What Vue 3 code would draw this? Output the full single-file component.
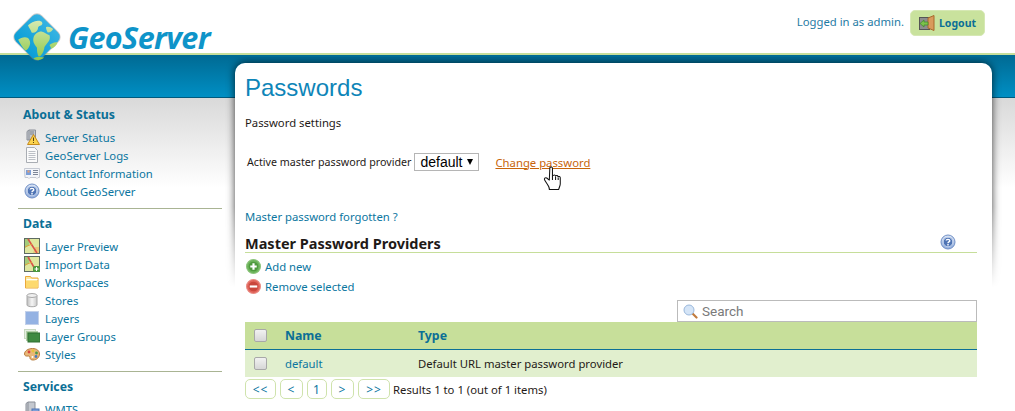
<script setup>
const groups = [
  {
    title: 'About & Status',
    items: [
      { label: 'Server Status', icon: 'status' },
      { label: 'GeoServer Logs', icon: 'page' },
      { label: 'Contact Information', icon: 'card' },
      { label: 'About GeoServer', icon: 'help' }
    ]
  },
  {
    title: 'Data',
    items: [
      { label: 'Layer Preview', icon: 'map' },
      { label: 'Import Data', icon: 'mapadd' },
      { label: 'Workspaces', icon: 'folder' },
      { label: 'Stores', icon: 'store' },
      { label: 'Layers', icon: 'layer' },
      { label: 'Layer Groups', icon: 'groups' },
      { label: 'Styles', icon: 'palette' }
    ]
  },
  {
    title: 'Services',
    items: [{ label: 'WMTS', icon: 'server' }]
  }
]

const icons = {
  status: '<path d="M3 2.500 5 1h6.500v10H3z" fill="#c4c8cf" stroke="#8a8f98"/><path d="M5 1v10" stroke="#8a8f98"/><path d="M6 3h4M6 5h4" stroke="#7d828a"/><path d="M9.500 5.500 15.500 15.500H3.500z" fill="#fbd34d" stroke="#c68a1c" stroke-linejoin="round"/><path d="M9.500 8.500v3.500M9.500 13v1" stroke="#5a4010"/>',
  page: '<path d="M2.500 .5h8l3 3v12h-11z" fill="#fbfbfb" stroke="#a9adb3"/><path d="M4.500 4.500h7M4.500 6.500h7M4.500 8.500h7M4.500 10.500h7M4.500 12.500h7" stroke="#bcc0c6"/>',
  card: '<path d="M.5 3.500h15v9h-1.500l-1 1-1-1h-6l-1 1-1-1h-3z" fill="#f3f5f9" stroke="#c5c9d2"/><rect x="2" y="5" width="5" height="5" fill="#7c9fd8"/><rect x="3.500" y="5.500" width="2" height="2" fill="#e8a070"/><path d="M9 5.500h5M9 7.500h5M9 9.500h5" stroke="#7d8698"/>',
  help: '<circle cx="8" cy="8" r="7" fill="url(#helpBlue)" stroke="#6f8fc6"/><circle cx="8" cy="8" r="4.800" fill="#4f74b4" stroke="#c5d5ef"/><path d="M6.200 6.500C6.300 5 9.800 5 9.800 6.800 9.800 8 8 7.900 8 9.200" fill="none" stroke="#fff" stroke-width="1.400"/><path d="M8 10v1.400" stroke="#fff" stroke-width="1.400"/>',
  map: '<rect x=".5" y=".5" width="15" height="15" fill="#dfe79f" stroke="#5d6b62"/><path d="M1 1h5l-1 6-4 3z" fill="#a5cc7a"/><path d="M11 9h4v6h-6z" fill="#e9c778"/><path d="M4 1 13 15" stroke="#d9534a" stroke-width="1.600"/><path d="M1 9 8 6" stroke="#e2a23c"/>',
  mapadd: '<rect x=".5" y=".5" width="15" height="15" fill="#dfe79f" stroke="#5d6b62"/><path d="M1 1h5l-1 6-4 3z" fill="#a5cc7a"/><path d="M4 1 11 13" stroke="#d9534a" stroke-width="1.600"/><path d="M1 9 8 6" stroke="#e2a23c"/><rect x="9" y="10" width="7" height="6" rx="1.500" fill="#4d9a3e"/><path d="M12.500 11v4M10.500 13h4" stroke="#fff"/>',
  folder: '<path d="M1.500 2.500h5l1 1.500h6.500v10h-12.500z" fill="#fde9a0" stroke="#eba83a"/><path d="M2.500 5.500h11" stroke="#fff"/><path d="M2 7h12v6.500h-12z" fill="#fdd96e"/>',
  store: '<path d="M3 3.500v9.500c0 2.300 10 2.300 10 0v-9.500z" fill="url(#storeGray)" stroke="#a8a8a8"/><ellipse cx="8" cy="3.500" rx="5" ry="2" fill="#efefef" stroke="#a8a8a8"/>',
  layer: '<rect x="1.500" y="1.500" width="13" height="13" fill="#94b2e3" stroke="#c2d0ea"/>',
  groups: '<rect x=".5" y="1.500" width="11" height="9" fill="#e6efe2" stroke="#c8d8c0"/><rect x="2.500" y="3.500" width="11" height="9" fill="#9cc38f" stroke="#b3d0a8"/><rect x="4" y="5" width="12" height="9" fill="#3f8a41" stroke="#2f6f33"/>',
  palette: '<path d="M8.500 2.500C4 2.500.5 5 .5 8c0 2 2 2.300 3.500 2 1.500-.3 2 .8 2 2s1.200 2 3 2c4 0 6.500-3 6.500-6s-2.500-5.500-7-5.500z" fill="#e9b878" stroke="#b97e40"/><circle cx="5" cy="6" r="1.400" fill="#d9453c"/><circle cx="9" cy="5" r="1.400" fill="#e8c23a"/><circle cx="12.500" cy="7" r="1.400" fill="#4b9a48"/><circle cx="12" cy="10.500" r="1.400" fill="#4a78c2"/><circle cx="8.500" cy="11" r="1" fill="#fff"/>',
  server: '<path d="M2 2.500 4 1h7v12H2z" fill="#c4c8cf" stroke="#8a8f98"/><path d="M4 1v12" stroke="#8a8f98"/><rect x="8" y="8" width="7" height="7" fill="#7c9fd8" stroke="#4f74b4"/>'
}

const continents = 'M27 24c3-3 8-6 13-5 3 1 4 3 2 5-2 1-4 1-4 4-1 3-4 5-7 4-1-3-3-5-4-8zM16 40c3-2 7-4 11-2 2 2 3 5 2 8-1 3-3 6-5 6-3-3-6-8-8-12zM33 38c1-4 5-7 9-7 4 1 5 3 9 4 1 3 0 6-2 8-2 3-4 4-4 7-1 4-3 8-6 9-2-3-2-7-2-10-2-3-5-6-4-11zM51 46c2-2 6-4 9-3-1 3-4 6-7 7zM47 26c3-1 5 0 8 2-1 2-3 4-6 4-1-2-2-4-2-6zM33 61c3-2 8-2 12-1-3 3-8 4-12 1z'

const pages = ['<<', '<', '1', '>', '>>']
</script>

<template>
  <div class="page">
    <svg class="defs" width="0" height="0" aria-hidden="true">
      <defs>
        <linearGradient id="helpBlue" x1="0" y1="0" x2="0" y2="1">
          <stop offset="0" stop-color="#dfe8f7" />
          <stop offset="1" stop-color="#8eaadb" />
        </linearGradient>
        <linearGradient id="storeGray" x1="0" y1="0" x2="1" y2="0">
          <stop offset="0" stop-color="#bdbdbd" />
          <stop offset=".5" stop-color="#f5f5f5" />
          <stop offset="1" stop-color="#c9c9c9" />
        </linearGradient>
        <linearGradient id="globeSea" x1="0" y1="0" x2="0" y2="1">
          <stop offset="0" stop-color="#35b2e2" />
          <stop offset="1" stop-color="#0a9ed6" />
        </linearGradient>
        <linearGradient id="globeLand" x1="0" y1="0" x2="0" y2="1">
          <stop offset="0" stop-color="#d5eab0" />
          <stop offset="1" stop-color="#8fc84a" />
        </linearGradient>
      </defs>
    </svg>

    <header class="top">
      <a class="logo">
        <svg class="globe" width="52" height="52" viewBox="8 8 58 58" aria-hidden="true">
          <rect x="16" y="16" width="42" height="42" rx="8" transform="rotate(45 37 37)" fill="#8a8a8a" opacity=".45" />
          <rect x="17" y="17" width="40" height="40" rx="7" transform="rotate(45 37 37)" fill="url(#globeSea)" />
          <path :d="continents" fill="url(#globeLand)" />
        </svg>
        <span class="wordmark">GeoServer</span>
      </a>
      <div class="session">
        <span>Logged in as admin.</span>
        <button class="logout">
          <svg width="16" height="16" viewBox="0 0 16 16" aria-hidden="true">
            <rect x=".5" y="2.500" width="10" height="12" fill="#8d8d8d" stroke="#555" />
            <path d="M9 3 15 .5v15L9 13z" fill="#d99a5b" stroke="#a8692c" />
            <path d="M1 8.500 5 5v2h4v3H5v2z" fill="#7cc24a" stroke="#3f8a2a" stroke-width=".7" />
          </svg>
          Logout
        </button>
      </div>
    </header>
    <div class="band"></div>

    <div class="layout">
      <nav class="sidebar">
        <section v-for="group in groups" :key="group.title" class="group">
          <h3>{{ group.title }}</h3>
          <ul>
            <li v-for="item in group.items" :key="item.label">
              <svg width="16" height="16" viewBox="0 0 16 16" aria-hidden="true" v-html="icons[item.icon]"></svg>
              <a>{{ item.label }}</a>
            </li>
          </ul>
        </section>
      </nav>

      <main class="card">
        <div class="card-shadow"></div>
        <div class="card-body">
          <h1>Passwords</h1>
          <p class="subtitle">Password settings</p>

          <div class="provider-row">
            <label>Active master password provider</label>
            <span class="select">default <i></i></span>
            <a class="change">Change password</a>
            <svg class="cursor" width="21" height="25" viewBox="0 0 20 24" aria-hidden="true">
              <path d="M6.500 1.500c1-1 2.500-.5 2.500 1v7l1-.5c.8-.8 2 0 2 .5.800-.8 2.200-.3 2.300.8.800-.6 2.200-.1 2.200 1V17c0 2-1 3-1.500 5.500h-9C6.500 20 4 18 1.500 13.500c-.8-1.500.5-2.800 2-2L6 13.500z" fill="#fff" stroke="#111" stroke-linejoin="round" />
              <path d="M9 9.500v4M12 10v3.500M14.500 11v2.500" stroke="#111" fill="none" />
            </svg>
          </div>

          <a class="forgotten">Master password forgotten ?</a>

          <div class="section-head">
            <h2>Master Password Providers</h2>
            <svg width="16" height="16" viewBox="0 0 16 16" aria-hidden="true" v-html="icons.help"></svg>
          </div>

          <div class="action">
            <svg width="15" height="15" viewBox="0 0 14 14" aria-hidden="true">
              <circle cx="7" cy="7" r="6.500" fill="#6cb35a" stroke="#8cc47c" />
              <circle cx="7" cy="7" r="4.500" fill="#4e9a3e" />
              <path d="M7 4v6M4 7h6" stroke="#fff" stroke-width="2" />
            </svg>
            <a>Add new</a>
          </div>
          <div class="action">
            <svg width="15" height="15" viewBox="0 0 14 14" aria-hidden="true">
              <circle cx="7" cy="7" r="6.500" fill="#e0645a" stroke="#e98c84" />
              <circle cx="7" cy="7" r="4.500" fill="#c9463c" />
              <path d="M3.500 7h7" stroke="#fff" stroke-width="2" />
            </svg>
            <a>Remove selected</a>
          </div>

          <div class="search-row">
            <div class="search">
              <svg width="15" height="15" viewBox="0 0 15 15" aria-hidden="true">
                <path d="M9.500 9.500 13.500 13.500" stroke="#c07a3c" stroke-width="2.200" stroke-linecap="round" />
                <circle cx="6" cy="6" r="5" fill="#d5e5f7" stroke="#9ab8dc" />
              </svg>
              <span>Search</span>
            </div>
          </div>

          <table>
            <thead>
              <tr>
                <th class="check"><span class="box"></span></th>
                <th class="name">Name</th>
                <th>Type</th>
              </tr>
            </thead>
            <tbody>
              <tr>
                <td class="check"><span class="box"></span></td>
                <td class="name"><a>default</a></td>
                <td>Default URL master password provider</td>
              </tr>
            </tbody>
          </table>

          <div class="pager">
            <a v-for="p in pages" :key="p" class="page-btn">{{ p }}</a>
            <span class="results">Results 1 to 1 (out of 1 items)</span>
          </div>
        </div>
      </main>
    </div>
  </div>
</template>

<style>
html,
body {
  margin: 0;
  height: 411px;
  overflow: hidden;
  background: #fff;
}
</style>

<style scoped>
.page {
  width: 1015px;
  height: 411px;
  overflow: hidden;
  position: relative;
  font-family: "Noto Sans", sans-serif;
  font-size: 11.3px;
  color: #1f1a17;
}
a {
  color: #0b76a0;
}
.defs {
  position: absolute;
}
.top {
  height: 53px;
  display: flex;
  justify-content: flex-end;
  border-bottom: 2px solid #c6de9a;
  box-sizing: content-box;
}
.logo {
  position: absolute;
  left: 11px;
  top: 11px;
  display: flex;
  align-items: center;
  height: 52px;
  z-index: 2;
}
.wordmark {
  font-family: "Open Sans", sans-serif;
  font-weight: 700;
  font-style: italic;
  font-size: 30.500px;
  letter-spacing: -0.6px;
  color: #0e94c9;
  margin-left: 5px;
}
.session {
  display: flex;
  align-items: flex-start;
  gap: 6px;
  padding: 10px 30px 0 0;
  color: #1f7ba4;
  line-height: 24px;
}
.logout {
  display: flex;
  align-items: center;
  gap: 4px;
  width: 75px;
  height: 26px;
  padding: 0 0 0 8px;
  border: 1px solid #d6e8b4;
  border-radius: 5px;
  background: #c9e29d;
  font: 700 10.5px "Noto Sans", sans-serif;
  color: #0b6f96;
}
.band {
  height: 42px;
  background: linear-gradient(#006a93, #008fc4);
  border-bottom: 1px solid #005a7e;
}
.layout {
  display: grid;
  grid-template-columns: 235px 757px;
  height: 320px;
  background: linear-gradient(#d9d9d9, #fff 90px);
}
.sidebar {
  padding: 8px 13px 0 18px;
}
.group {
  border-bottom: 1px solid #a9b493;
  padding-bottom: 8px;
  margin-bottom: 6px;
}
.group h3 {
  margin: 0 0 4px 5px;
  font-size: 12.3px;
  line-height: 18px;
  font-weight: 700;
  color: #0b6f96;
}
.group ul {
  list-style: none;
  margin: 0;
  padding: 0 0 0 6px;
}
.group li {
  display: flex;
  align-items: center;
  gap: 5px;
  height: 18px;
}
.card {
  position: relative;
  margin-top: -35px;
}
.card-shadow {
  position: absolute;
  left: -12px;
  right: -12px;
  top: -6px;
  height: 230px;
  overflow: hidden;
  -webkit-mask-image: linear-gradient(#000 65%, transparent);
  mask-image: linear-gradient(#000 65%, transparent);
}
.card-shadow::before {
  content: "";
  position: absolute;
  left: 12px;
  right: 12px;
  top: 6px;
  bottom: -30px;
  border-radius: 10px 10px 0 0;
  box-shadow: 0 0 9px rgba(0, 0, 0, 0.75);
}
.card-body {
  position: relative;
  background: #fff;
  border-radius: 10px 10px 0 0;
  padding: 8px 15px 0 10px;
  height: 340px;
}
h1 {
  margin: 0;
  font-family: "Liberation Sans", sans-serif;
  font-size: 24px;
  line-height: 34px;
  font-weight: 400;
  color: #0e85b8;
}
.subtitle {
  margin: 9px 0 0;
  line-height: 18px;
}
.provider-row {
  position: relative;
  display: flex;
  align-items: center;
  margin: 20px 0 0 2px;
  height: 20px;
}
.provider-row label {
  font-size: 10.7px;
}
.select {
  margin-left: 3px;
  width: 65px;
  height: 18px;
  border: 1px solid #b5b5b5;
  box-sizing: border-box;
  display: flex;
  align-items: center;
  padding-left: 5px;
  font-family: "Liberation Sans", sans-serif;
  font-size: 14px;
  color: #000;
  position: relative;
}
.select i {
  position: absolute;
  right: 5px;
  top: 5px;
  border-left: 3.5px solid transparent;
  border-right: 3.5px solid transparent;
  border-top: 6px solid #000;
}
.change {
  margin-left: 16px;
  color: #c8650a;
  text-decoration: underline;
}
.cursor {
  position: absolute;
  left: 296px;
  top: 14px;
}
.forgotten {
  display: block;
  margin-top: 36px;
  line-height: 18px;
}
.section-head {
  display: flex;
  justify-content: space-between;
  align-items: center;
  height: 18px;
  margin-top: 8px;
  padding-right: 21px;
  border-bottom: 1px solid #c6de9a;
}
.section-head h2 {
  margin: 0;
  font-size: 14.500px;
  font-weight: 700;
}
.section-head svg {
  margin-top: -2px;
}
.section-head + .action {
  margin-top: 3px;
}
.action {
  display: flex;
  align-items: center;
  gap: 4px;
  height: 20px;
  padding-left: 1px;
}
.search-row {
  display: flex;
  justify-content: flex-end;
  margin-top: 4px;
}
.search {
  width: 300px;
  height: 22px;
  box-sizing: border-box;
  border: 1px solid #bbb;
  display: flex;
  align-items: center;
  gap: 4px;
  padding-left: 5px;
  font-family: Roboto, sans-serif;
  font-size: 13.500px;
  color: #7a7a7a;
}
table {
  width: 100%;
  border-collapse: collapse;
  table-layout: fixed;
}
th {
  height: 27px;
  padding: 0;
  text-align: left;
  font-size: 12.300px;
  background: #c7df9a;
  color: #0b6f96;
  border-bottom: 1px solid #0b6f96;
}
td {
  height: 27px;
  padding: 0;
  background: #e1efce;
}
.check {
  width: 40px;
  padding-left: 9px;
  box-sizing: border-box;
}
.name {
  width: 133px;
}
.box {
  display: block;
  width: 13px;
  height: 13px;
  box-sizing: border-box;
  border: 1px solid #a8a8a8;
  border-radius: 2px;
  background: linear-gradient(#f2f2f2, #d6d6d6);
}
.pager {
  display: flex;
  align-items: center;
  gap: 4px;
  margin-top: 2px;
}
.page-btn {
  height: 20px;
  width: 23px;
  box-sizing: border-box;
  display: flex;
  align-items: center;
  justify-content: center;
  border: 1px solid #cfe3ac;
  border-radius: 5px;
  font-size: 12px;
  letter-spacing: 1px;
}
.page-btn:first-child {
  width: 31px;
}
.page-btn:nth-child(3) {
  width: 20px;
}
.page-btn:nth-child(5) {
  width: 32px;
}
.results {
  margin-left: -1px;
}
</style>
